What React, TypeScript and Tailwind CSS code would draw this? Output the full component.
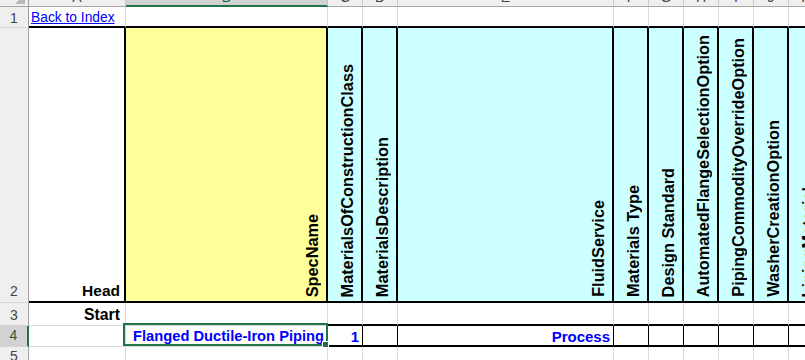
import React from 'react';

const COLS = ['A', 'B', 'C', 'D', 'E', 'F', 'G', 'H', 'I', 'J', 'K', 'L'];

const HEADS = [
  'MaterialsOfConstructionClass',
  'MaterialsDescription',
  'FluidService',
  'Materials Type',
  'Design Standard',
  'AutomatedFlangeSelectionOption',
  'PipingCommodityOverrideOption',
  'WasherCreationOption',
  'LiningMaterial',
  '',
];

const RH = 'flex items-end justify-center bg-[#efefef] border-r border-r-[#a0a0a0] border-b border-b-[#d4d4d4] text-[14px] leading-[16px] text-[#444] overflow-hidden';

function Vertical({ text }: { text: string }) {
  return (
    <span className="[writing-mode:vertical-rl] rotate-180 whitespace-nowrap font-bold text-[16.3px] leading-[18px] text-black">
      {text}
    </span>
  );
}

export default function App() {
  return (
    <div className="w-[805px] h-[360px] overflow-hidden bg-white font-['Liberation_Sans',Arial,sans-serif]">
      <div className="grid grid-cols-[29px_97px_202px_35px_35px_216px_35px_35px_35px_35px_35px_35px_35px] grid-rows-[7px_21px_275px_23px_21px_21px]">
        {/* column headers */}
        <div className="relative bg-[#efefef] border-r border-r-[#a0a0a0] border-b border-b-[#a6a6a6] overflow-hidden">
          <svg className="absolute right-[3px] bottom-[2px]" width="10" height="10" viewBox="0 0 10 10">
            <path d="M10 0 L10 10 L0 10 Z" fill="#b8b8b8" />
          </svg>
        </div>
        {COLS.map((c) =>
          c === 'B' ? (
            <div key={c} className="flex items-end justify-center bg-[#d2d2d2] border-r border-r-[#c8c8c8] border-b-2 border-b-[#217346] overflow-hidden text-[14px] leading-[14px] text-[#1e5e3a]">
              <span className="pb-[1px]">{c}</span>
            </div>
          ) : (
            <div key={c} className="flex items-end justify-center bg-[#efefef] border-r border-r-[#c8c8c8] border-b border-b-[#a6a6a6] overflow-hidden text-[14px] leading-[14px] text-[#444]">
              <span className="pb-[2px]">{c}</span>
            </div>
          )
        )}

        {/* row 1 */}
        <div className={`${RH} pb-[1px]`}>1</div>
        <div className="flex items-end border-r border-r-[#d9d9d9] border-b-2 border-b-black pl-[2px] pb-[1px]">
          <span className="text-[13.8px] leading-[15px] text-[#0000ff] underline whitespace-nowrap">Back to Index</span>
        </div>
        {COLS.slice(1).map((c) => (
          <div key={c} className="border-r border-r-[#d9d9d9] border-b-2 border-b-black" />
        ))}

        {/* row 2 */}
        <div className={`${RH} pb-[3px]`}>2</div>
        <div className="flex items-end justify-end border-r-2 border-r-black border-b-2 border-b-black pr-[4px] pb-[2px]">
          <span className="font-bold text-[15.5px] leading-[17px] text-black">Head</span>
        </div>
        <div className="flex items-end justify-end overflow-hidden bg-[#ffff99] border-r-2 border-r-black border-b-2 border-b-black pr-[5px] pb-[4px]">
          <Vertical text="SpecName" />
        </div>
        {HEADS.map((h, i) => (
          <div key={i} className="flex items-end justify-end overflow-hidden bg-[#ccffff] border-r-2 border-r-black border-b-2 border-b-black pr-[5px] pb-[4px]">
            {h && <Vertical text={h} />}
          </div>
        ))}

        {/* row 3 */}
        <div className={`${RH} pb-[2px]`}>3</div>
        <div className="flex items-end justify-end border-r border-r-[#d9d9d9] border-b border-b-[#d9d9d9] pr-[5px] pb-[2px]">
          <span className="font-bold text-[15.8px] leading-[17px] text-black">Start</span>
        </div>
        <div className="border-r border-r-[#d9d9d9] border-b border-b-[#d9d9d9]" />
        {COLS.slice(2).map((c) => (
          <div key={c} className="border-r border-r-[#d9d9d9] border-b-2 border-b-black" />
        ))}

        {/* row 4 */}
        <div className="flex items-end justify-center bg-[#d2d2d2] border-r-2 border-r-[#217346] border-b border-b-[#d4d4d4] text-[14px] leading-[16px] text-[#1e5e3a] pb-[3px]">4</div>
        <div className="border-r border-r-[#d9d9d9] border-b border-b-[#d9d9d9]" />
        <div className="relative flex items-end justify-end border-r border-r-black border-b border-b-[#d9d9d9] pr-[3px] pb-[1px]">
          <span className="font-bold text-[14.7px] leading-[17px] text-[#0000ff] whitespace-nowrap">Flanged Ductile-Iron Piping</span>
          <div className="absolute -left-[3px] -right-[1px] -top-[3px] bottom-0 border-2 border-[#217346] pointer-events-none" />
          <div className="absolute -right-[2px] -bottom-[2px] w-[7px] h-[7px] bg-[#217346] border border-white" />
        </div>
        <div className="flex items-end justify-end border-r border-r-black border-b-2 border-b-black pr-[3px]">
          <span className="font-bold text-[15px] leading-[17px] text-[#0000ff]">1</span>
        </div>
        <div className="border-r border-r-black border-b-2 border-b-black" />
        <div className="flex items-end justify-end border-r border-r-black border-b-2 border-b-black pr-[3px]">
          <span className="font-bold text-[15px] leading-[17px] text-[#0000ff]">Process</span>
        </div>
        {COLS.slice(5).map((c) => (
          <div key={c} className="border-r border-r-black border-b-2 border-b-black" />
        ))}

        {/* row 5 */}
        <div className={`${RH} pb-[3px]`}>5</div>
        {COLS.map((c) => (
          <div key={c} className="border-r border-r-[#d9d9d9] border-b border-b-[#d9d9d9]" />
        ))}
      </div>
    </div>
  );
}
